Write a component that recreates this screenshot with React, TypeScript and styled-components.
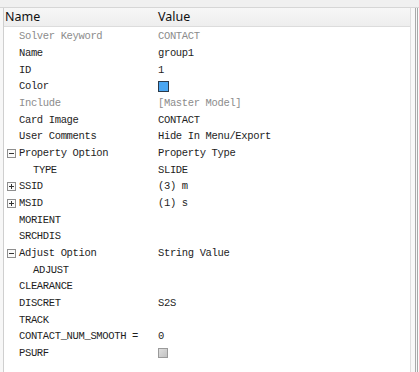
import React from 'react'
import styled, { createGlobalStyle } from 'styled-components'

type Row = {
  name: string
  value?: string
  indent?: number
  expander?: '+' | '-'
  dim?: boolean
  kind?: 'swatch' | 'check'
}

const rows: Row[] = [
  { name: 'Solver Keyword', value: 'CONTACT', dim: true },
  { name: 'Name', value: 'group1' },
  { name: 'ID', value: '1' },
  { name: 'Color', kind: 'swatch' },
  { name: 'Include', value: '[Master Model]', dim: true },
  { name: 'Card Image', value: 'CONTACT' },
  { name: 'User Comments', value: 'Hide In Menu/Export' },
  { name: 'Property Option', value: 'Property Type', expander: '-' },
  { name: 'TYPE', value: 'SLIDE', indent: 1 },
  { name: 'SSID', value: '(3) m', expander: '+' },
  { name: 'MSID', value: '(1) s', expander: '+' },
  { name: 'MORIENT' },
  { name: 'SRCHDIS' },
  { name: 'Adjust Option', value: 'String Value', expander: '-' },
  { name: 'ADJUST', indent: 1 },
  { name: 'CLEARANCE' },
  { name: 'DISCRET', value: 'S2S' },
  { name: 'TRACK' },
  { name: 'CONTACT_NUM_SMOOTH =', value: '0' },
  { name: 'PSURF', kind: 'check' },
]

const GlobalStyle = createGlobalStyle`
  html, body {
    margin: 0;
    padding: 0;
    background: #ffffff;
  }
`

const Frame = styled.div`
  width: 419px;
  height: 372px;
  display: flex;
  flex-direction: column;
  overflow: hidden;
  background: #fbfbfb;
`

const TopStrip = styled.div`
  height: 7px;
  background: #f0f0f0;
  border-bottom: 1px solid #d6d6d6;
`

const Body = styled.div`
  flex: 1;
  display: flex;
`

const Gutter = styled.div`
  width: 3px;
  background: #f7f7f7;
`

const Panel = styled.div`
  width: 406px;
  border-left: 1px solid #cfcfcf;
  border-right: 1px solid #dedede;
  background: #ffffff;
  display: flex;
  flex-direction: column;
`

const ScrollEdge = styled.div`
  flex: 1;
  background: #f8f8f8;
  border-right: 3px double #a9a9a9;
  margin-right: 1px;
`

const Header = styled.div`
  height: 18px;
  display: grid;
  grid-template-columns: 153px 1fr;
  align-items: center;
  background: linear-gradient(#f7f7f7, #eeeeee);
  border-bottom: 1px solid #dcdcdc;
  font-family: 'Noto Sans', 'Noto Sans CJK SC', sans-serif;
  font-size: 12.5px;
  color: #111;
  padding-left: 1px;
`

const HeaderCell = styled.div`
  line-height: 18px;
`

const List = styled.div`
  padding-top: 1px;
  display: flex;
  flex-direction: column;
`

const RowLine = styled.div`
  height: 16.68px;
  display: grid;
  grid-template-columns: 153px 1fr;
  align-items: center;
  font-family: 'Liberation Mono', 'Noto Sans CJK SC', monospace;
  font-size: 10.5px;
  letter-spacing: -0.35px;
`

const NameCell = styled.div<{ $indent: number; $dim?: boolean }>`
  display: flex;
  align-items: center;
  padding-left: ${(p) => 3 + p.$indent * 14}px;
  color: ${(p) => (p.$dim ? '#8c8c8c' : '#1e1e1e')};
  white-space: nowrap;
`

const ValueCell = styled.div<{ $dim?: boolean }>`
  color: ${(p) => (p.$dim ? '#8c8c8c' : '#1e1e1e')};
  white-space: nowrap;
  display: flex;
  align-items: center;
  padding-left: 1px;
`

const ExpanderSlot = styled.span`
  width: 9px;
  height: 9px;
  margin-right: 3px;
  display: inline-flex;
  align-items: center;
`

const Swatch = styled.span`
  width: 9px;
  height: 9px;
  background: #4aa6f2;
  border: 1px solid #2b3a4a;
`

const Check = styled.span`
  width: 8px;
  height: 8px;
  border: 1px solid #9a9a9a;
  background: linear-gradient(135deg, #dedede, #c2c2c2);
`

const Expander = ({ sign }: { sign: '+' | '-' }) => (
  <svg width="9" height="9" viewBox="0 0 9 9">
    <rect x="0.5" y="0.5" width="8" height="8" fill="#fafafa" stroke="#8e8e8e" />
    <line x1="2" y1="4.5" x2="7" y2="4.5" stroke="#333" />
    {sign === '+' && <line x1="4.5" y1="2" x2="4.5" y2="7" stroke="#333" />}
  </svg>
)

export default function App() {
  return (
    <>
      <GlobalStyle />
      <Frame>
        <TopStrip />
        <Body>
          <Gutter />
          <Panel>
            <Header>
              <HeaderCell>Name</HeaderCell>
              <HeaderCell>Value</HeaderCell>
            </Header>
            <List>
              {rows.map((r) => (
                <RowLine key={r.name}>
                  <NameCell $indent={r.indent ?? 0} $dim={r.dim}>
                    <ExpanderSlot>{r.expander && <Expander sign={r.expander} />}</ExpanderSlot>
                    {r.name}
                  </NameCell>
                  <ValueCell $dim={r.dim}>
                    {r.kind === 'swatch' && <Swatch />}
                    {r.kind === 'check' && <Check />}
                    {r.value}
                  </ValueCell>
                </RowLine>
              ))}
            </List>
          </Panel>
          <ScrollEdge />
        </Body>
      </Frame>
    </>
  )
}
